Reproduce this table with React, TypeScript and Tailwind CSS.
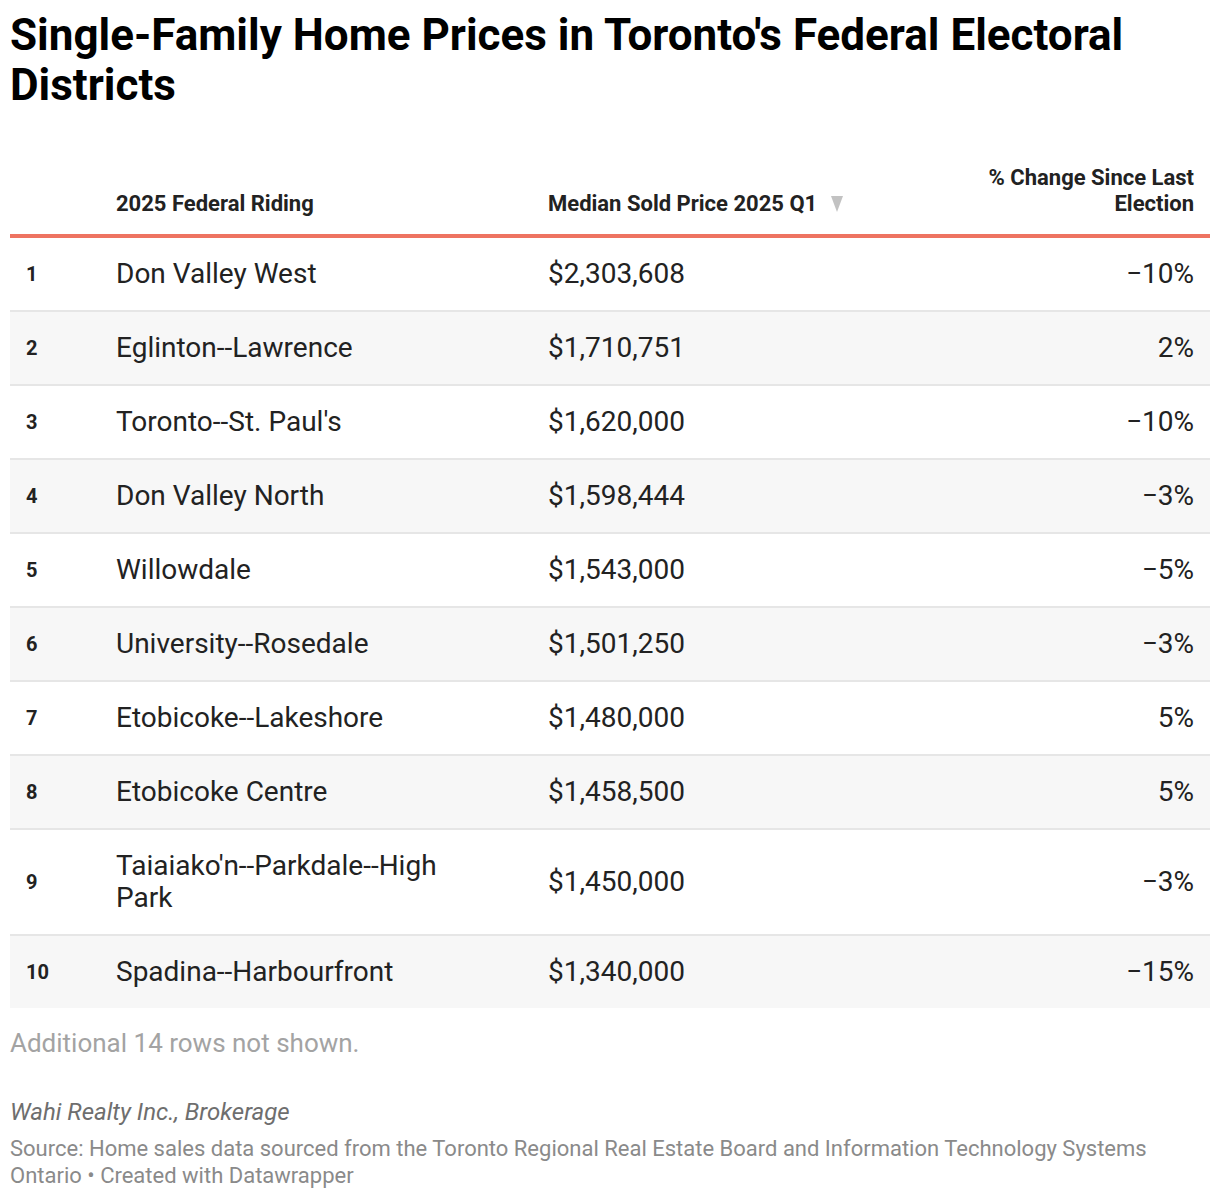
import React from "react"

type Row = { rank: number; riding: string; price: string; change: string }

const rows: Row[] = [
  { rank: 1, riding: "Don Valley West", price: "$2,303,608", change: "−10%" },
  { rank: 2, riding: "Eglinton--Lawrence", price: "$1,710,751", change: "2%" },
  { rank: 3, riding: "Toronto--St. Paul's", price: "$1,620,000", change: "−10%" },
  { rank: 4, riding: "Don Valley North", price: "$1,598,444", change: "−3%" },
  { rank: 5, riding: "Willowdale", price: "$1,543,000", change: "−5%" },
  { rank: 6, riding: "University--Rosedale", price: "$1,501,250", change: "−3%" },
  { rank: 7, riding: "Etobicoke--Lakeshore", price: "$1,480,000", change: "5%" },
  { rank: 8, riding: "Etobicoke Centre", price: "$1,458,500", change: "5%" },
  { rank: 9, riding: "Taiaiako'n--Parkdale--High Park", price: "$1,450,000", change: "−3%" },
  { rank: 10, riding: "Spadina--Harbourfront", price: "$1,340,000", change: "−15%" },
]

export default function App() {
  return (
    <div className="bg-white p-[10px] font-['Roboto',sans-serif] text-[#222]">
      <h1 className="text-[44px] leading-[50px] font-bold text-[#000]">
        Single-Family Home Prices in Toronto's Federal Electoral Districts
      </h1>

      <div className="mt-[55px] flex items-end pb-[17px] border-b-4 border-[#ee7361] text-[22px] leading-[26px] font-bold text-[#222]">
        <div className="w-[106px] shrink-0" />
        <div className="w-[432px] shrink-0">2025 Federal Riding</div>
        <div className="flex-1 flex items-center gap-[14px]">
          <span>Median Sold Price 2025 Q1</span>
          <svg width="12" height="16" viewBox="0 0 12 16">
            <polygon points="0,0 12,0 6,16" fill="#c2c2c2" />
          </svg>
        </div>
        <div className="w-[244px] shrink-0 pr-4 text-right">% Change Since Last Election</div>
      </div>

      <div>
        {rows.map((r, i) => (
          <div
            key={r.rank}
            className={`flex items-center py-5 ${i % 2 === 1 ? "bg-[#f7f7f7]" : "bg-white"} ${
              i < rows.length - 1 ? "border-b-2 border-[#e6e6e6]" : ""
            }`}
          >
            <div className="w-[106px] shrink-0 pl-4 text-[20px] font-bold text-[#222]">{r.rank}</div>
            <div className="w-[432px] shrink-0">
              <div className="w-[340px] text-[28px] leading-[32px]">{r.riding}</div>
            </div>
            <div className="flex-1 text-[28px] leading-[32px]">{r.price}</div>
            <div className="w-[244px] shrink-0 pr-4 text-right text-[28px] leading-[32px]">{r.change}</div>
          </div>
        ))}
      </div>

      <p className="mt-[20px] text-[26px] leading-[30px] text-[#a3a3a3]">Additional 14 rows not shown.</p>

      <p className="mt-[40px] text-[24px] leading-[28px] italic text-[#6e6e6e]">Wahi Realty Inc., Brokerage</p>
      <p className="mt-[9px] text-[22px] leading-[27px] text-[#8a8a8a]">
        Source: Home sales data sourced from the Toronto Regional Real Estate Board and Information Technology Systems
        <br />
        Ontario • Created with Datawrapper
      </p>
    </div>
  )
}
